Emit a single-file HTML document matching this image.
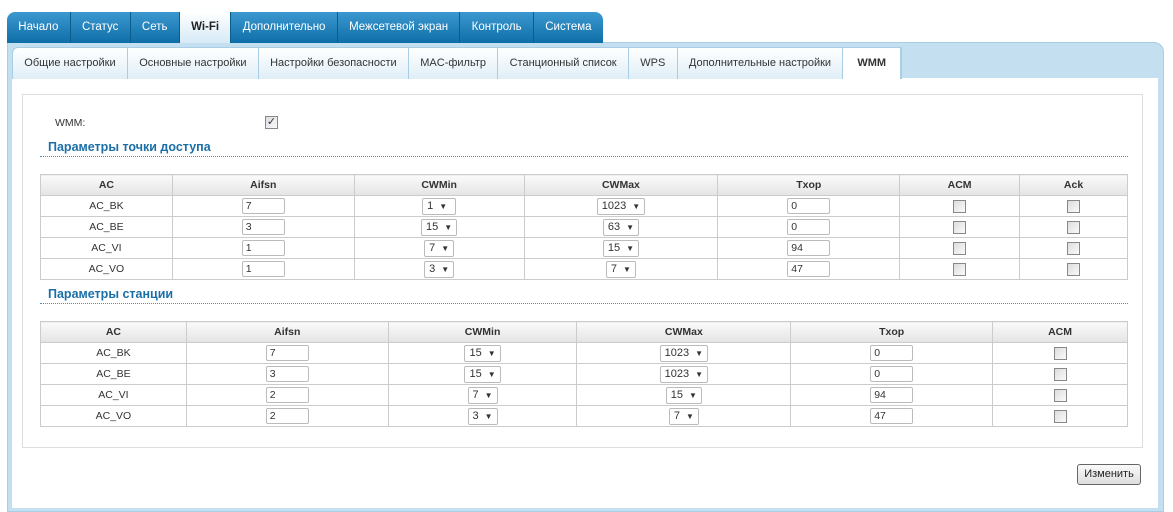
<!DOCTYPE html>
<html><head><meta charset="utf-8"><style>
*{box-sizing:border-box}
body{margin:0;width:1173px;height:502px;background:#fff;font-family:Tahoma,"Liberation Sans",sans-serif;font-size:10.5px;color:#333;position:relative;overflow:hidden}
.top{position:absolute;left:7px;top:12px;height:31px;display:flex;border-radius:8px 8px 0 0;overflow:hidden;background:linear-gradient(#3c98cf,#0f6ea8)}
.top div{color:#fff;padding:0 11.3px;line-height:31px;border-right:1px solid #0b5c8f;font-size:11.5px}
.top div.a{background:linear-gradient(#fff,#d6eaf6);color:#222;font-weight:bold}
.panel{position:absolute;left:7px;top:42px;width:1157px;height:470px;background:#c3dff0;border-radius:0 10px 0 0;border:1px solid #a9cde4}
.sub{position:absolute;left:12px;top:47px;height:32px;display:flex;background:linear-gradient(#fff,#e0eef7);border-radius:6px 0 0 0;border:1px solid #a9cde4;border-bottom:none}
.sub div{padding:0 11.3px;line-height:31px;border-right:1px solid #a9cde4;font-size:11px;color:#333}
.sub div.a{background:#fff;font-weight:bold;padding:0 14px}
.white{position:absolute;left:12px;top:78px;width:1146px;height:430px;background:#fff}
.box{position:absolute;left:22px;top:94px;width:1121px;height:354px;border:1px solid #ddd}
.lbl{position:absolute;left:55px;top:117px}
.cb{display:inline-block;width:13px;height:13px;border:1px solid #888;background:linear-gradient(135deg,#ddd,#fafafa);vertical-align:middle}
.h{position:absolute;left:48px;color:#1a6fa8;font-weight:bold;font-size:12.5px}
.line{position:absolute;left:40px;width:1088px;border-top:1px dotted #4a8fbf}
table{position:absolute;left:40px;width:1088px;border-collapse:collapse}
td,th{border:1px solid #ccc;height:21px;text-align:center;padding:0;font-size:10.5px;vertical-align:middle;line-height:12px}
th{background:linear-gradient(#fafafa,#e4e4e4);font-weight:bold;color:#333}
.in{display:inline-block;width:43px;height:16px;border:1px solid #bbb;border-radius:2px;text-align:left;padding-left:3px;line-height:14px;vertical-align:middle}
.sel{display:inline-block;height:17px;border:1px solid #bbb;border-radius:2px;padding:0 4px;line-height:15px;vertical-align:middle;text-align:left;font-size:11px}
.sel i{font-style:normal;font-size:8px;margin-left:6px}
.btn{position:absolute;left:1077px;top:464px;width:64px;height:21px;border:1px solid #666;border-radius:3px;background:linear-gradient(#fafafa,#ddd);text-align:center;line-height:19px;color:#222;font-size:11px}
</style></head><body>
<div class="panel"></div>
<div class="top"><div>Начало</div><div>Статус</div><div>Сеть</div><div class="a">Wi-Fi</div><div>Дополнительно</div><div>Межсетевой экран</div><div>Контроль</div><div style="border:none">Система</div></div>
<div class="white"></div>
<div class="sub"><div>Общие настройки</div><div>Основные настройки</div><div>Настройки безопасности</div><div>MAC-фильтр</div><div>Станционный список</div><div>WPS</div><div>Дополнительные настройки</div><div class="a">WMM</div></div>
<div class="box"></div>
<div class="lbl">WMM:</div>
<span class="cb" style="position:absolute;left:265px;top:116px;color:#335;font-size:11px;line-height:10px;text-align:center">✓</span>
<div class="h" style="top:140px">Параметры точки доступа</div>
<div class="line" style="top:156px"></div>
<table style="top:174px">
<colgroup><col style="width:132px"><col style="width:182px"><col style="width:170px"><col style="width:194px"><col style="width:182px"><col style="width:120px"><col style="width:108px"></colgroup>
<tr><th>AC</th><th>Aifsn</th><th>CWMin</th><th>CWMax</th><th>Txop</th><th>ACM</th><th>Ack</th></tr>
<tr><td>AC_BK</td><td><span class="in">7</span></td><td><span class="sel" style="width:34px">1<i>▼</i></span></td><td><span class="sel">1023<i>▼</i></span></td><td><span class="in">0</span></td><td><span class="cb"></span></td><td><span class="cb"></span></td></tr>
<tr><td>AC_BE</td><td><span class="in">3</span></td><td><span class="sel">15<i>▼</i></span></td><td><span class="sel">63<i>▼</i></span></td><td><span class="in">0</span></td><td><span class="cb"></span></td><td><span class="cb"></span></td></tr>
<tr><td>AC_VI</td><td><span class="in">1</span></td><td><span class="sel">7<i>▼</i></span></td><td><span class="sel">15<i>▼</i></span></td><td><span class="in">94</span></td><td><span class="cb"></span></td><td><span class="cb"></span></td></tr>
<tr><td>AC_VO</td><td><span class="in">1</span></td><td><span class="sel">3<i>▼</i></span></td><td><span class="sel">7<i>▼</i></span></td><td><span class="in">47</span></td><td><span class="cb"></span></td><td><span class="cb"></span></td></tr>
</table>
<div class="h" style="top:287px">Параметры станции</div>
<div class="line" style="top:303px"></div>
<table style="top:321px">
<colgroup><col style="width:146px"><col style="width:202px"><col style="width:189px"><col style="width:214px"><col style="width:202px"><col style="width:135px"></colgroup>
<tr><th>AC</th><th>Aifsn</th><th>CWMin</th><th>CWMax</th><th>Txop</th><th>ACM</th></tr>
<tr><td>AC_BK</td><td><span class="in">7</span></td><td><span class="sel">15<i>▼</i></span></td><td><span class="sel">1023<i>▼</i></span></td><td><span class="in">0</span></td><td><span class="cb"></span></td></tr>
<tr><td>AC_BE</td><td><span class="in">3</span></td><td><span class="sel">15<i>▼</i></span></td><td><span class="sel">1023<i>▼</i></span></td><td><span class="in">0</span></td><td><span class="cb"></span></td></tr>
<tr><td>AC_VI</td><td><span class="in">2</span></td><td><span class="sel">7<i>▼</i></span></td><td><span class="sel">15<i>▼</i></span></td><td><span class="in">94</span></td><td><span class="cb"></span></td></tr>
<tr><td>AC_VO</td><td><span class="in">2</span></td><td><span class="sel">3<i>▼</i></span></td><td><span class="sel">7<i>▼</i></span></td><td><span class="in">47</span></td><td><span class="cb"></span></td></tr>
</table>
<div class="btn">Изменить</div>
</body></html>
